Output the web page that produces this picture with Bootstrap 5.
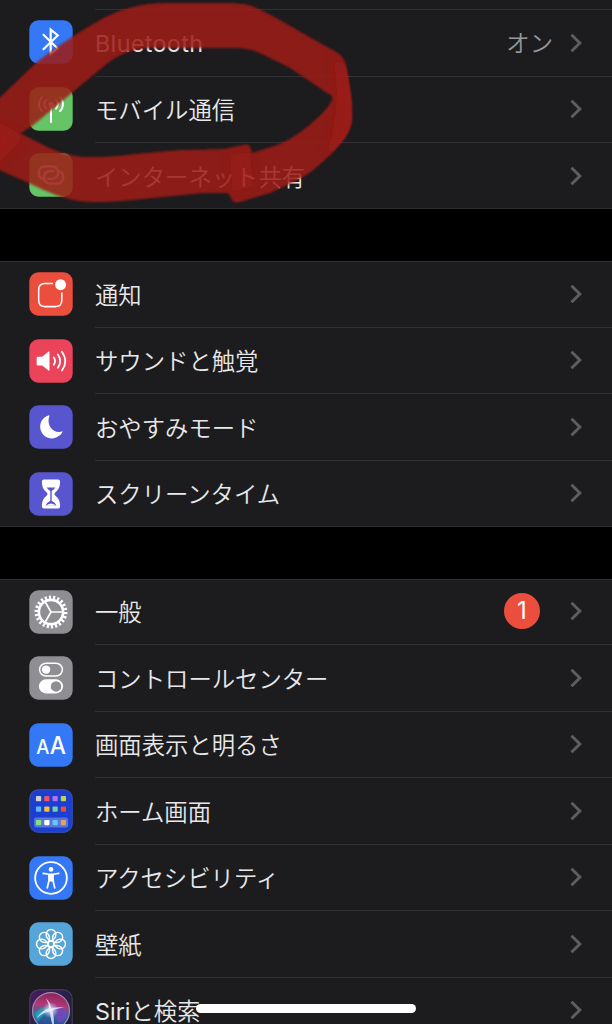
<!DOCTYPE html>
<html lang="ja">
<head>
<meta charset="utf-8">
<meta name="viewport" content="width=device-width, initial-scale=1">
<title>設定</title>
<link rel="stylesheet" href="https://cdn.jsdelivr.net/npm/bootstrap@5.3.0/dist/css/bootstrap.min.css">
<style>
  html, body { height: 1024px; overflow: hidden; }
  body { background: #000; color: #e8e8ea; font-family: Inter, "Noto Sans CJK JP", sans-serif; font-size: 23.35px; font-weight: 350; }
  main { height: 1024px; }
  .settings-group { background: #1c1c1e; box-shadow: inset 0 1px #303034, inset 0 -1px #303034; margin-bottom: 51.5px; }
  .settings-group.first-group { box-shadow: inset 0 -1px #303034; padding-top: 9px; margin-bottom: 52.5px; }
  .settings-group:last-child { margin-bottom: 0; }
  .settings-row { height: 66.5px; padding-left: 29px; }
  .settings-icon { width: 44px; height: 44px; padding: .3px; margin-right: 22px; flex: none; overflow: visible; }
  .row-body { padding-right: 30px; margin-top: -2px; border-top: 1px solid #323236; line-height: 1; }
  .first-group .row-body { margin-top: 0; }
  .no-line { border-top-color: transparent; }
  .row-label { padding-top: 3px; white-space: nowrap; }
  .row-value { color: #98989f; margin-right: 17px; padding-top: 2px; }
  .chevron { width: 12px; height: 20px; flex: none; fill: none; stroke: #5d5d62; stroke-width: 3; stroke-linejoin: miter; }
  .count-badge { width: 36px; height: 36px; margin-right: 30px; background: #ec4e3d; color: #fff; font-size: 24px; font-weight: 400; }
  .home-bar { left: 196px; top: 1004px; width: 220px; height: 9px; background: #fff; }
  .latin { font-weight: 400; }
  .row-label.latin { letter-spacing: .35px; padding-top: 1px; }
</style>
</head>
<body>
<svg width="0" height="0" class="position-absolute">
  <defs>
    <symbol id="chev" viewBox="0 0 12 20"><path d="M1.5 1.8 9.8 10 1.5 18.2"/></symbol>
    <linearGradient id="siriBg" x1="0" y1="0" x2="1" y2="1"><stop offset="0" stop-color="#4a1c62"/><stop offset=".5" stop-color="#27204a"/><stop offset="1" stop-color="#15202e"/></linearGradient>
    <linearGradient id="siriOrb" x1=".5" y1="0" x2=".4" y2="1"><stop offset="0" stop-color="#8d2458"/><stop offset=".35" stop-color="#b03a78"/><stop offset=".6" stop-color="#35679e"/><stop offset="1" stop-color="#203c8c"/></linearGradient>
    <radialGradient id="siriGlow"><stop offset="0" stop-color="#fff"/><stop offset=".25" stop-color="#d8eaff" stop-opacity=".8"/><stop offset="1" stop-color="#bcd8ff" stop-opacity="0"/></radialGradient>
    <filter id="soft"><feGaussianBlur stdDeviation="1.2"/></filter>
    <filter id="soft3" x="-50%" y="-50%" width="200%" height="200%"><feGaussianBlur stdDeviation="4"/></filter>
  </defs>
</svg>

<main class="position-relative overflow-hidden">
  <section class="settings-group first-group">
    <div class="settings-row d-flex align-items-center">
      <svg class="settings-icon" viewBox="0 0 43 43"><rect width="43" height="43" rx="9" fill="#3478f6"/><path d="M13.500 13.800 28.200 28 21.200 33.700V9.300L28.200 15 13.500 29.200" fill="none" stroke="#fff" stroke-width="2.200"/></svg>
      <div class="row-body d-flex align-items-center flex-grow-1 h-100"><span class="row-label latin flex-grow-1">Bluetooth</span><span class="row-value">オン</span><svg class="chevron"><use href="#chev"/></svg></div>
    </div>
    <div class="settings-row d-flex align-items-center">
      <svg class="settings-icon" viewBox="0 0 43 43"><rect width="43" height="43" rx="9" fill="#65c466"/><g fill="none" stroke="#fff" stroke-width="2" stroke-linecap="round"><path d="M21.500 18v16.500"/><path d="M26.400 12.500a6 6 0 0 1 0 8.600M30.500 10a9.500 9.500 0 0 1 0 13.500M16.600 12.500a6 6 0 0 0 0 8.600M12.500 10a9.500 9.500 0 0 0 0 13.500"/></g><circle cx="21.500" cy="17" r="2.800" fill="#fff"/></svg>
      <div class="row-body d-flex align-items-center flex-grow-1 h-100"><span class="row-label flex-grow-1">モバイル通信</span><svg class="chevron"><use href="#chev"/></svg></div>
    </div>
    <div class="settings-row d-flex align-items-center">
      <svg class="settings-icon" viewBox="0 0 43 43"><rect width="43" height="43" rx="9" fill="#65c466"/><g fill="none" stroke="#fff" stroke-width="2.200" stroke-linecap="round"><path d="M13.300 25.300a6.400 6.400 0 0 1 2.200-12.300h7a6.200 6.200 0 0 1 0 12.400h-3.500"/><path d="M29.700 17.700a6.400 6.400 0 0 1-2.200 12.300h-7a6.200 6.200 0 0 1 0-12.400h3.500"/></g></svg>
      <div class="row-body d-flex align-items-center flex-grow-1 h-100"><span class="row-label flex-grow-1">インターネット共有</span><svg class="chevron"><use href="#chev"/></svg></div>
    </div>
  </section>

  <section class="settings-group">
    <div class="settings-row d-flex align-items-center">
      <svg class="settings-icon" viewBox="0 0 43 43"><rect width="43" height="43" rx="9" fill="#eb4e3d"/><path d="M23.500 11H15.500Q9.300 11 9.300 17.200V27.800Q9.300 34 15.500 34H26Q32.200 34 32.200 27.800V20" fill="none" stroke="#fff" stroke-width="1.500"/><circle cx="31" cy="12.300" r="5.400" fill="#fff"/></svg>
      <div class="row-body no-line d-flex align-items-center flex-grow-1 h-100"><span class="row-label flex-grow-1">通知</span><svg class="chevron"><use href="#chev"/></svg></div>
    </div>
    <div class="settings-row d-flex align-items-center">
      <svg class="settings-icon" viewBox="0 0 43 43"><rect width="43" height="43" rx="9" fill="#eb445a"/><path d="M8.300 17.300h4.500L19 12.200q1-.6 1 .6v17.600q0 1.200-1 .6L12.800 26H8.300q-1 0-1-1v-6.700q0-1 1-1Z" fill="#fff"/><path d="M24.300 18q2.400 3.600 0 7.200M28.300 15q4.600 6.600 0 13.200M32.300 12.300q6.800 9.300 0 18.600" fill="none" stroke="#fff" stroke-width="1.800" stroke-linecap="round"/></svg>
      <div class="row-body d-flex align-items-center flex-grow-1 h-100"><span class="row-label flex-grow-1">サウンドと触覚</span><svg class="chevron"><use href="#chev"/></svg></div>
    </div>
    <div class="settings-row d-flex align-items-center">
      <svg class="settings-icon" viewBox="0 0 43 43"><rect width="43" height="43" rx="9" fill="#5856ce"/><path d="M19.300 9.800A11.700 11.700 0 1 0 33.200 25.600C25 29 16.200 20.500 19.900 10.500Q20 9.600 19.300 9.800Z" fill="#fff"/></svg>
      <div class="row-body d-flex align-items-center flex-grow-1 h-100"><span class="row-label flex-grow-1">おやすみモード</span><svg class="chevron"><use href="#chev"/></svg></div>
    </div>
    <div class="settings-row d-flex align-items-center">
      <svg class="settings-icon" viewBox="0 0 43 43"><rect width="43" height="43" rx="9" fill="#5856ce"/><path d="M14.500 7.200H28.500Q30.500 7.200 30.500 9.200C30.500 15 29 17.200 25.500 20.300Q24.200 21.500 25.500 22.700C29 25.800 30.500 28 30.500 33.800Q30.500 35.800 28.500 35.800H14.500Q12.500 35.800 12.500 33.800C12.500 28 14 25.800 17.500 22.700Q18.800 21.500 17.500 20.300C14 17.200 12.500 15 12.500 9.200Q12.500 7.200 14.500 7.200Z" fill="#fff"/><path d="M17.200 15h8.600q-.9 1.700-3.600 3.500v9.700q3.800 1.800 4.600 5H16.200q.8-3.200 4.600-5v-9.700q-2.700-1.800-3.600-3.500Z" fill="#5856ce"/><path d="M16.500 33.200q2-2.200 5-2.400 3 .2 5 2.400Z" fill="#fff"/></svg>
      <div class="row-body d-flex align-items-center flex-grow-1 h-100"><span class="row-label flex-grow-1">スクリーンタイム</span><svg class="chevron"><use href="#chev"/></svg></div>
    </div>
  </section>

  <section class="settings-group">
    <div class="settings-row d-flex align-items-center">
      <svg class="settings-icon" viewBox="0 0 43 43"><rect width="43" height="43" rx="9" fill="#8e8e93"/><g fill="none" stroke="#fff"><circle cx="21.500" cy="21.500" r="14.600" stroke-width="3.400" pathLength="44" stroke-dasharray="1.050 .95"/><circle cx="21.500" cy="21.500" r="12" stroke-width="2.600"/><path d="M21.500 21.500H33.500M21.500 21.500 15.500 11.100M21.500 21.500 15.500 31.900" stroke-width="1.700"/></g></svg>
      <div class="row-body no-line d-flex align-items-center flex-grow-1 h-100"><span class="row-label flex-grow-1">一般</span><span class="count-badge rounded-circle d-flex align-items-center justify-content-center">1</span><svg class="chevron"><use href="#chev"/></svg></div>
    </div>
    <div class="settings-row d-flex align-items-center">
      <svg class="settings-icon" viewBox="0 0 43 43"><rect width="43" height="43" rx="9" fill="#8e8e93"/><rect x="10.200" y="6.900" width="22.600" height="12.600" rx="6.300" fill="none" stroke="#fff" stroke-width="1.500"/><circle cx="16.600" cy="13.200" r="4.200" fill="#fff"/><rect x="9.500" y="22.800" width="24" height="14" rx="7" fill="#fff"/><circle cx="26.500" cy="29.800" r="5.200" fill="#8e8e93"/></svg>
      <div class="row-body d-flex align-items-center flex-grow-1 h-100"><span class="row-label flex-grow-1">コントロールセンター</span><svg class="chevron"><use href="#chev"/></svg></div>
    </div>
    <div class="settings-row d-flex align-items-center">
      <svg class="settings-icon" viewBox="0 0 43 43"><rect width="43" height="43" rx="9" fill="#3478f6"/><g fill="#fff" font-family="Inter, sans-serif" font-weight="500"><text x="6.800" y="30.500" font-size="19.500" textLength="13" lengthAdjust="spacingAndGlyphs">A</text><text x="20.300" y="30.500" font-size="24.500" textLength="16" lengthAdjust="spacingAndGlyphs">A</text></g></svg>
      <div class="row-body d-flex align-items-center flex-grow-1 h-100"><span class="row-label flex-grow-1">画面表示と明るさ</span><svg class="chevron"><use href="#chev"/></svg></div>
    </div>
    <div class="settings-row d-flex align-items-center">
      <svg class="settings-icon" viewBox="0 0 43 43"><rect width="43" height="43" rx="9" fill="#1c3fd2"/><rect x=".5" y=".5" width="42" height="42" rx="8.500" fill="none" stroke="#3a4f9a"/><rect x="4.800" y="28" width="33.600" height="9.800" rx="2" fill="#5677dc"/>
        <rect x="6.600" y="6.700" width="5.200" height="5.200" rx="1" fill="#cfd3d0"/><rect x="14.800" y="6.700" width="5.200" height="5.200" rx="1" fill="#ed5565"/><rect x="23" y="6.700" width="5.200" height="5.200" rx="1" fill="#b072f0"/><rect x="31.200" y="6.700" width="5.200" height="5.200" rx="1" fill="#b7d648"/>
        <rect x="6.600" y="17" width="5.200" height="5.200" rx="1" fill="#5bb8f5"/><rect x="14.800" y="17" width="5.200" height="5.200" rx="1" fill="#f6bd3e"/><rect x="23" y="17" width="5.200" height="5.200" rx="1" fill="#6fd3a4"/><rect x="31.200" y="17" width="5.200" height="5.200" rx="1" fill="#ea4d3a"/>
        <rect x="6.600" y="30.300" width="5.200" height="5.200" rx="1" fill="#84e283"/><rect x="14.800" y="30.300" width="5.200" height="5.200" rx="1" fill="#fff"/><rect x="23" y="30.300" width="5.200" height="5.200" rx="1" fill="#62c9f8"/><rect x="31.200" y="30.300" width="5.200" height="5.200" rx="1" fill="#f1a052"/></svg>
      <div class="row-body d-flex align-items-center flex-grow-1 h-100"><span class="row-label flex-grow-1">ホーム画面</span><svg class="chevron"><use href="#chev"/></svg></div>
    </div>
    <div class="settings-row d-flex align-items-center">
      <svg class="settings-icon" viewBox="0 0 43 43"><rect width="43" height="43" rx="9" fill="#3478f6"/><circle cx="21.500" cy="21.500" r="15.700" fill="none" stroke="#fff" stroke-width="1.800"/><circle cx="21.500" cy="13" r="2.300" fill="#fff"/><path d="M13.800 17 19.500 17.800H23.500L29.200 17M23.500 18v6l1.700 7.300M19.500 18v6l-1.700 7.300" fill="none" stroke="#fff" stroke-width="1.700" stroke-linecap="round" stroke-linejoin="round"/><path d="M19 17.500h5V25h-5Z" fill="#fff"/></svg>
      <div class="row-body d-flex align-items-center flex-grow-1 h-100"><span class="row-label flex-grow-1">アクセシビリティ</span><svg class="chevron"><use href="#chev"/></svg></div>
    </div>
    <div class="settings-row d-flex align-items-center">
      <svg class="settings-icon" viewBox="0 0 43 43"><rect width="43" height="43" rx="9" fill="#56a5d8"/><g fill="none" stroke="#fff" stroke-width="1.400"><circle cx="21.500" cy="21.500" r="3"/>
        <g id="petals"><path id="petal" d="M21.500 18.500C17.500 16.500 16.700 14 16.700 12a4.800 4.800 0 0 1 9.600 0C26.300 14 25.500 16.500 21.500 18.500Z"/><use href="#petal" transform="rotate(90 21.500 21.500)"/><use href="#petal" transform="rotate(180 21.500 21.500)"/><use href="#petal" transform="rotate(270 21.500 21.500)"/></g><use href="#petals" transform="rotate(45 21.500 21.500)"/></g></svg>
      <div class="row-body d-flex align-items-center flex-grow-1 h-100"><span class="row-label flex-grow-1">壁紙</span><svg class="chevron"><use href="#chev"/></svg></div>
    </div>
    <div class="settings-row d-flex align-items-center">
      <svg class="settings-icon" viewBox="0 0 43 43"><rect x=".5" y=".5" width="42" height="42" rx="9" fill="url(#siriBg)" stroke="#49405c"/><circle cx="21.500" cy="21.500" r="18.300" fill="url(#siriOrb)" stroke="#a28aa8" stroke-width="1.200"/><path d="M5 25Q12 15 21 20Q12 25 8 33Z" fill="#18c3c3" opacity=".65" filter="url(#soft)"/><path d="M22 20Q32 14 38 23Q36 31 30 34Z" fill="#7447bf" opacity=".8" filter="url(#soft)"/><circle cx="21" cy="20.500" r="8" fill="url(#siriGlow)"/><path d="M16.500 9Q22 14 21.500 19Q27 17 35 18Q27 19 23 21Q25 29 24 38Q21 30 20.500 22Q13 23 7 29Q12 21 19.500 19Q19.500 14 16.500 9Z" fill="#eef3ff" opacity=".8"/></svg>
      <div class="row-body d-flex align-items-center flex-grow-1 h-100"><span class="row-label flex-grow-1"><span class="latin">Siri</span>と検索</span><svg class="chevron"><use href="#chev"/></svg></div>
    </div>
  </section>

  <!-- marker ring drawn over the mobile data row -->
  <svg class="position-absolute top-0 start-0" width="612" height="215" viewBox="0 0 612 215">
    <clipPath id="ringClip"><path id="ring" clip-rule="evenodd" fill-rule="evenodd" d="M-5 102C8 90 22 76 37 62C50 52 61 44 72 37C82 31 90 25 100 20C120 9 140 3 167 3L220 3C235 3 243 3 252 6C262 10 271 15 280 20L320 43L333 50C343 55 345 60 347 70C349 81 351 92 352 103C352 112 353 118 351 125C349 136 336 150 327 158C318 166 312 172 303 177C293 182 282 188 270 193L240 202Q233 204 231 198L228 193L204 193L143 199C125 201 112 202 100 202C90 202 82 202 73 200C60 197 45 191 33 185L-5 168ZM20 133C25 131 31 127 37 122L67 97L97 72C104 66 110 61 117 57C124 53 132 50 140 49C152 47 163 48 180 48L232 48C242 48 250 49 257 52C268 57 279 62 290 68L327 93Q335 96 331 102C325 112 313 122 303 130C295 136 285 142 277 145L252 153C251 147 250 143 243 145L223 149L180 150C155 152 135 154 117 156C105 157 94 157 83 157C75 156 67 154 60 152C46 147 34 140 20 133Z"/></clipPath>
    <use href="#ring" fill="#9e1a19" opacity=".86" filter="url(#soft)"/>
    <g clip-path="url(#ringClip)" fill="#b81d1a"><g filter="url(#soft3)"><path opacity=".35" d="M-8 118Q10 128 24 137L-8 170Z"/><path opacity=".35" d="M334 60L360 70V140L326 154Q342 115 334 60Z"/><path opacity=".25" d="M230 155L250 152L254 186L232 192Z"/></g></g>
  </svg>
</main>

<div class="home-bar position-fixed rounded-pill"></div>
<script src="https://cdn.jsdelivr.net/npm/bootstrap@5.3.0/dist/js/bootstrap.bundle.min.js"></script>
</body>
</html>
